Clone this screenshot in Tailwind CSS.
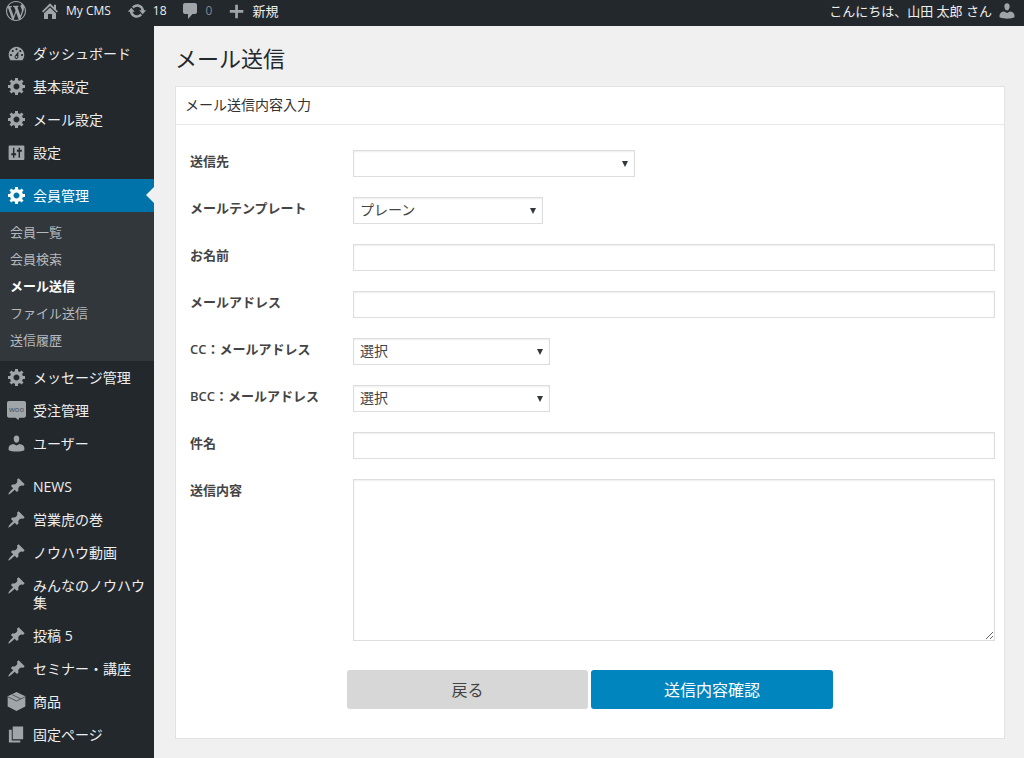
<!DOCTYPE html>
<html lang="ja">
<head>
<meta charset="utf-8">
<meta name="viewport" content="width=device-width, initial-scale=1">
<title>メール送信 - My CMS</title>
<script src="https://cdn.jsdelivr.net/npm/@tailwindcss/browser@4"></script>
</head>
<body class="flex min-h-screen flex-col bg-[#f0f0f0] font-['Open_Sans','Noto_Sans_CJK_JP',sans-serif] text-sm text-[#444]">
<svg class="hidden" aria-hidden="true">
  <symbol id="wp" viewBox="0 0 20 20"><path d="M20 10c0-5.51-4.49-10-10-10C4.48 0 0 4.49 0 10c0 5.52 4.48 10 10 10 5.51 0 10-4.48 10-10zM7.78 15.37L4.37 6.22c.55-.02 1.17-.08 1.17-.08.5-.06.44-1.13-.06-1.11 0 0-1.45.11-2.37.11-.18 0-.37 0-.58-.01C4.12 2.69 6.87 1.11 10 1.11c2.33 0 4.45.87 6.05 2.34-.68-.11-1.65.39-1.65 1.58 0 .74.45 1.36.9 2.1.35.61.55 1.36.55 2.46 0 1.49-1.4 5-1.4 5l-3.03-8.37c.54-.02.82-.17.82-.17.5-.05.44-1.25-.06-1.22 0 0-1.44.12-2.38.12-.87 0-2.33-.12-2.33-.12-.5-.03-.56 1.2-.06 1.22l.92.08 1.26 3.41zM17.41 10c.24-.64.74-1.87.43-4.25.7 1.29 1.05 2.71 1.05 4.25 0 3.29-1.73 6.24-4.4 7.78.97-2.59 1.94-5.2 2.92-7.78zM6.1 18.09C3.12 16.65 1.11 13.53 1.11 10c0-1.3.23-2.48.72-3.59C3.25 10.3 4.67 14.2 6.1 18.09zm4.03-6.63l2.58 6.98c-.86.29-1.76.45-2.71.45-.79 0-1.57-.11-2.29-.33.81-2.38 1.62-4.74 2.42-7.1z"/></symbol>
  <symbol id="home" viewBox="0 0 20 20"><path d="M16 8.5l2 1.700-1.200 1.400L10 5l-6.800 6.600L2 10.200 10 2.200l4 4v-2.400h2v4.700zm-6-2.100l6 5.800V18h-4v-5H8v5H4v-5.800z"/></symbol>
  <symbol id="update" viewBox="0 0 20 20"><path d="M10.2 3.28c3.53 0 6.43 2.61 6.92 6h2.08l-3.5 4-3.5-4h2.32c-.45-1.97-2.21-3.45-4.32-3.45-1.45 0-2.73.71-3.54 1.78L4.95 5.66C6.23 4.2 8.11 3.28 10.2 3.28zm-.4 13.44c-3.52 0-6.43-2.61-6.92-6H.8l3.5-4c1.17 1.33 2.33 2.67 3.5 4H5.48c.45 1.97 2.21 3.45 4.32 3.45 1.45 0 2.73-.71 3.54-1.78l1.71 1.95c-1.28 1.46-3.15 2.38-5.25 2.38z"/></symbol>
  <symbol id="comment" viewBox="0 0 20 20"><path d="M5 2h10c1.100 0 2 .9 2 2v7c0 1.100-.9 2-2 2h-2.500L8 18v-5H5c-1.100 0-2-.9-2-2V4c0-1.100.9-2 2-2z"/></symbol>
  <symbol id="plus" viewBox="0 0 20 20"><path d="M17 9v3h-6v6H8v-6H2V9h6V3h3v6h6z"/></symbol>
  <symbol id="dash" viewBox="0 0 20 20"><path fill-rule="evenodd" d="M3.760 17h12.480c1.200-1.500 1.960-3.400 1.960-5.500 0-4.600-3.700-8.500-8.200-8.500s-8.200 3.900-8.200 8.500c0 2.100.76 4 1.960 5.500zM10 4.500c.6 0 1.100.5 1.100 1.100s-.5 1.100-1.100 1.100-1.100-.5-1.100-1.100.5-1.100 1.100-1.100zM6 6.200c.6 0 1.100.5 1.100 1.100s-.5 1.100-1.100 1.100-1.100-.5-1.100-1.100.5-1.100 1.100-1.100zm8 0c.6 0 1.100.5 1.100 1.100s-.5 1.100-1.100 1.100-1.100-.5-1.100-1.100.5-1.100 1.100-1.100zm-5.370 6L12 7.600v6.100c0 1.100-.9 2-2 2s-2-.9-2-2c0-.57.240-1.080.630-1.500zM4.200 10.400c.6 0 1.100.5 1.100 1.100s-.5 1.100-1.100 1.100-1.100-.5-1.100-1.100.5-1.100 1.100-1.100zm11.600 0c.6 0 1.100.5 1.100 1.100s-.5 1.100-1.100 1.100-1.100-.5-1.100-1.100.5-1.100 1.100-1.100zM11 13.600c0-.55-.45-1-1-1s-1 .45-1 1 .45 1 1 1 1-.45 1-1z"/></symbol>
  <symbol id="gear" viewBox="0 1 19 19"><path d="M18 12h-2.180c-.17.7-.44 1.350-.81 1.930l1.540 1.540-2.100 2.100-1.540-1.540c-.58.360-1.230.630-1.910.790V19H8v-2.180c-.68-.16-1.330-.43-1.910-.79l-1.540 1.540-2.120-2.120 1.540-1.540c-.36-.58-.63-1.230-.79-1.910H1V9.030h2.170c.16-.7.44-1.350.8-1.940L2.430 5.550l2.100-2.100 1.540 1.540c.58-.37 1.240-.64 1.930-.81V2h3v2.180c.68.160 1.330.430 1.910.790l1.540-1.540 2.120 2.120-1.540 1.540c.36.590.640 1.240.8 1.940H18V12zm-8.500 1.500c1.660 0 3-1.340 3-3s-1.340-3-3-3-3 1.340-3 3 1.340 3 3 3z"/></symbol>
  <symbol id="sliders" viewBox="0 0 20 20"><path fill-rule="evenodd" d="M3 2.500h14c.8 0 1.300.5 1.300 1.300v12.900c0 .8-.5 1.300-1.300 1.300H3c-.8 0-1.300-.5-1.300-1.300V3.800c0-.8.5-1.300 1.300-1.300zM6.300 5v5.800H4.500v2.200h1.800v2.500h1.500V13h1.800v-2.200H7.800V5zm5.900 0v2H10.400v2.200h1.800v6.300h1.500V9.200h1.900V7h-1.900V5z"/></symbol>
  <symbol id="woo" viewBox="0 0 20 20"><path d="M2 0h16c1.100 0 2 .9 2 2v13.500c0 1.100-.9 2-2 2h-5l-1 2.500-3-2.500H2c-1.100 0-2-.9-2-2V2c0-1.100.9-2 2-2z"/><text x="10" y="11.500" text-anchor="middle" font-size="8" fill="#4a5056">woo</text></symbol>
  <symbol id="user" viewBox="0 0 20 20"><path d="M10 1.500c2 0 3 1.500 2.900 3.400C12.800 7.400 11.700 9.300 10 9.300S7.200 7.400 7.100 4.900C7 3 8 1.500 10 1.500zM6.800 10.600L10 12.200l3.200-1.600c2.900.1 5.100 2 5.100 4.500v1.700c0 .8-3.700 1.700-8.300 1.700s-8.300-.9-8.300-1.700v-1.700c0-2.500 2.200-4.400 5.100-4.500z"/></symbol>
  <symbol id="pin" viewBox="0 0 20 20"><path d="M10.440 3.020l1.820-1.820 6.360 6.350-1.830 1.820c-1.050-.68-2.480-.57-3.410.36l-.75.750c-.92.930-1.040 2.350-.35 3.410l-1.830 1.820-2.410-2.410-2.800 2.790c-.42.420-3.380 2.710-3.800 2.290s1.860-3.390 2.280-3.810l2.790-2.790L4.100 9.360l1.830-1.820c1.050.690 2.480.570 3.400-.36l.75-.75c.93-.92 1.050-2.350.36-3.410z"/></symbol>
  <symbol id="box" viewBox="0 0 20 20"><path d="M10 0l9.300 4.500v10.800L10 20 .7 15.300V4.500z"/><path d="M1 5.200l9 4.300 9-4.300M5.500 2.800l9 4.400" fill="none" stroke="#3a4046" stroke-width=".8"/></symbol>
  <symbol id="pages" viewBox="0 0 20 20"><path d="M6 15V1.500h11V15H6zm-1 1.200h9V18.500H2V5h3z"/></symbol>
</svg>

<header class="flex h-[26px] items-center justify-between bg-[#23282d] pr-2 pb-1 pl-[6px] text-[#eee]">
  <nav class="flex items-center" aria-label="ツールバー">
    <a href="#" aria-label="WordPress" class="mr-[14px]"><svg class="size-5 fill-[#a0a5aa]"><use href="#wp"/></svg></a>
    <a href="#" class="mr-4 flex items-center gap-[6px] text-xs font-medium"><svg class="size-5 fill-[#a0a5aa]"><use href="#home"/></svg>My CMS</a>
    <a href="#" class="mr-[13px] flex items-center gap-[6px] text-xs font-medium"><svg class="size-5 fill-[#a0a5aa]"><use href="#update"/></svg>18</a>
    <a href="#" class="mr-4 flex items-center gap-[6px] text-xs text-[#82878c]"><svg class="size-5 fill-[#a0a5aa]"><use href="#comment"/></svg>0</a>
    <a href="#" class="flex items-center gap-[6px] text-[13px]"><svg class="size-[18px] fill-[#a0a5aa]"><use href="#plus"/></svg>新規</a>
  </nav>
  <a href="#" class="flex items-center gap-[6px] text-[13px]">こんにちは、山田 太郎 さん<svg class="size-[18px] fill-[#a0a5aa]"><use href="#user"/></svg></a>
</header>

<div class="flex grow">
  <nav class="w-[154px] shrink-0 bg-[#23282d] pt-[11px] leading-[17px] text-[#eee]" aria-label="メインメニュー">
    <ul>
      <li><a href="#" class="flex gap-[7px] py-2 pr-2 pl-[7px]"><svg class="-my-px size-[19px] shrink-0 fill-[#a0a5aa]"><use href="#dash"/></svg>ダッシュボード</a></li>
      <li><a href="#" class="flex gap-[7px] py-2 pr-2 pl-[7px]"><svg class="-my-px size-[19px] shrink-0 fill-[#a0a5aa]"><use href="#gear"/></svg>基本設定</a></li>
      <li><a href="#" class="flex gap-[7px] py-2 pr-2 pl-[7px]"><svg class="-my-px size-[19px] shrink-0 fill-[#a0a5aa]"><use href="#gear"/></svg>メール設定</a></li>
      <li><a href="#" class="flex gap-[7px] py-2 pr-2 pl-[7px]"><svg class="-my-px size-[19px] shrink-0 fill-[#a0a5aa]"><use href="#sliders"/></svg>設定</a></li>
      <li class="mt-[10px]">
        <a href="#" aria-current="true" class="relative flex gap-[7px] bg-[#0073aa] py-2 pr-2 pl-[7px] text-white"><svg class="-my-px size-[19px] shrink-0 fill-white"><use href="#gear"/></svg>会員管理<span class="absolute top-2 right-0 border-y-8 border-r-8 border-y-transparent border-r-[#f0f0f0]"></span></a>
        <ul class="bg-[#32373c] px-[10px] py-[7px] text-[13px] leading-[27px] text-[#b4b9be]">
          <li><a href="#">会員一覧</a></li>
          <li><a href="#">会員検索</a></li>
          <li><a href="#" aria-current="page" class="font-bold text-white">メール送信</a></li>
          <li><a href="#">ファイル送信</a></li>
          <li><a href="#">送信履歴</a></li>
        </ul>
      </li>
      <li><a href="#" class="flex gap-[7px] py-2 pr-2 pl-[7px]"><svg class="-my-px size-[19px] shrink-0 fill-[#a0a5aa]"><use href="#gear"/></svg>メッセージ管理</a></li>
      <li><a href="#" class="flex gap-[7px] py-2 pr-2 pl-[7px]"><svg class="-my-px size-[19px] shrink-0 fill-[#a0a5aa]"><use href="#woo"/></svg>受注管理</a></li>
      <li><a href="#" class="flex gap-[7px] py-2 pr-2 pl-[7px]"><svg class="-my-px size-[19px] shrink-0 fill-[#a0a5aa]"><use href="#user"/></svg>ユーザー</a></li>
      <li class="mt-[10px]"><a href="#" class="flex gap-[7px] py-2 pr-2 pl-[7px]"><svg class="-my-px size-[19px] shrink-0 fill-[#a0a5aa]"><use href="#pin"/></svg>NEWS</a></li>
      <li><a href="#" class="flex gap-[7px] py-2 pr-2 pl-[7px]"><svg class="-my-px size-[19px] shrink-0 fill-[#a0a5aa]"><use href="#pin"/></svg>営業虎の巻</a></li>
      <li><a href="#" class="flex gap-[7px] py-2 pr-2 pl-[7px]"><svg class="-my-px size-[19px] shrink-0 fill-[#a0a5aa]"><use href="#pin"/></svg>ノウハウ動画</a></li>
      <li><a href="#" class="flex gap-[7px] py-2 pr-2 pl-[7px]"><svg class="-my-px size-[19px] shrink-0 fill-[#a0a5aa]"><use href="#pin"/></svg>みんなのノウハウ集</a></li>
      <li><a href="#" class="flex gap-[7px] py-2 pr-2 pl-[7px]"><svg class="-my-px size-[19px] shrink-0 fill-[#a0a5aa]"><use href="#pin"/></svg>投稿 5</a></li>
      <li><a href="#" class="flex gap-[7px] py-2 pr-2 pl-[7px]"><svg class="-my-px size-[19px] shrink-0 fill-[#a0a5aa]"><use href="#pin"/></svg>セミナー・講座</a></li>
      <li><a href="#" class="flex gap-[7px] py-2 pr-2 pl-[7px]"><svg class="-my-px size-[19px] shrink-0 fill-[#a0a5aa]"><use href="#box"/></svg>商品</a></li>
      <li><a href="#" class="flex gap-[7px] py-2 pr-2 pl-[7px]"><svg class="-my-px size-[19px] shrink-0 fill-[#a0a5aa]"><use href="#pages"/></svg>固定ページ</a></li>
    </ul>
  </nav>

  <main class="min-w-0 grow pt-4 pr-[19px] pb-[19px] pl-[21px]">
    <h1 class="mb-3 text-[22px] leading-8 text-[#23282d]">メール送信</h1>
    <section class="border border-[#e2e2e2] bg-white">
      <h2 class="border-b border-[#e8e8e8] px-[9px] pb-[2px] text-sm leading-[35px] text-[#333]">メール送信内容入力</h2>
      <form class="pt-[25px] pr-[9px] pb-[29px] pl-[14px]">
        <div class="grid grid-cols-[163px_1fr] gap-y-5">
          <label for="to" class="text-[13px] leading-[22px] font-semibold">送信先</label>
          <div class="relative w-[282px]"><select id="to" class="block h-[27px] w-full appearance-none border border-[#ddd] bg-white px-[6px] pb-[2px] shadow-[inset_0_1px_2px_#00000012]"><option></option></select><svg class="pointer-events-none absolute top-[11px] right-[7px] h-[6px] w-[6px] fill-[#32373c]" viewBox="0 0 6 6"><path d="M0 0h6L3 6z"/></svg></div>

          <label for="tpl" class="text-[13px] leading-[22px] font-semibold">メールテンプレート</label>
          <div class="relative w-[190px]"><select id="tpl" class="block h-[27px] w-full appearance-none border border-[#ddd] bg-white px-[6px] pb-[2px] shadow-[inset_0_1px_2px_#00000012]"><option>プレーン</option></select><svg class="pointer-events-none absolute top-[11px] right-[7px] h-[6px] w-[6px] fill-[#32373c]" viewBox="0 0 6 6"><path d="M0 0h6L3 6z"/></svg></div>

          <label for="name" class="text-[13px] leading-[22px] font-semibold">お名前</label>
          <input id="name" type="text" class="h-[27px] w-full border border-[#ddd] px-[6px] shadow-[inset_0_1px_2px_#00000012]">

          <label for="mail" class="text-[13px] leading-[22px] font-semibold">メールアドレス</label>
          <input id="mail" type="email" class="h-[27px] w-full border border-[#ddd] px-[6px] shadow-[inset_0_1px_2px_#00000012]">

          <label for="cc" class="text-[13px] leading-[22px] font-semibold">CC：メールアドレス</label>
          <div class="relative w-[197px]"><select id="cc" class="block h-[27px] w-full appearance-none border border-[#ddd] bg-white px-[6px] pb-[2px] shadow-[inset_0_1px_2px_#00000012]"><option>選択</option></select><svg class="pointer-events-none absolute top-[11px] right-[7px] h-[6px] w-[6px] fill-[#32373c]" viewBox="0 0 6 6"><path d="M0 0h6L3 6z"/></svg></div>

          <label for="bcc" class="text-[13px] leading-[22px] font-semibold">BCC：メールアドレス</label>
          <div class="relative w-[197px]"><select id="bcc" class="block h-[27px] w-full appearance-none border border-[#ddd] bg-white px-[6px] pb-[2px] shadow-[inset_0_1px_2px_#00000012]"><option>選択</option></select><svg class="pointer-events-none absolute top-[11px] right-[7px] h-[6px] w-[6px] fill-[#32373c]" viewBox="0 0 6 6"><path d="M0 0h6L3 6z"/></svg></div>

          <label for="subject" class="text-[13px] leading-[22px] font-semibold">件名</label>
          <input id="subject" type="text" class="h-[27px] w-full border border-[#ddd] px-[6px] shadow-[inset_0_1px_2px_#00000012]">

          <label for="body" class="text-[13px] leading-[22px] font-semibold">送信内容</label>
          <textarea id="body" class="block h-[162px] w-full resize border border-[#ddd] p-[6px] shadow-[inset_0_1px_2px_#00000012]"></textarea>
        </div>
        <div class="mt-[29px] ml-[157px] flex gap-[3px] text-base">
          <button type="button" class="h-[39px] w-[241px] rounded-[3px] bg-[#d7d7d7] text-[#444]">戻る</button>
          <button type="submit" class="h-[39px] w-[242px] rounded-[3px] bg-[#0085be] text-white">送信内容確認</button>
        </div>
      </form>
    </section>
  </main>
</div>
</body>
</html>
